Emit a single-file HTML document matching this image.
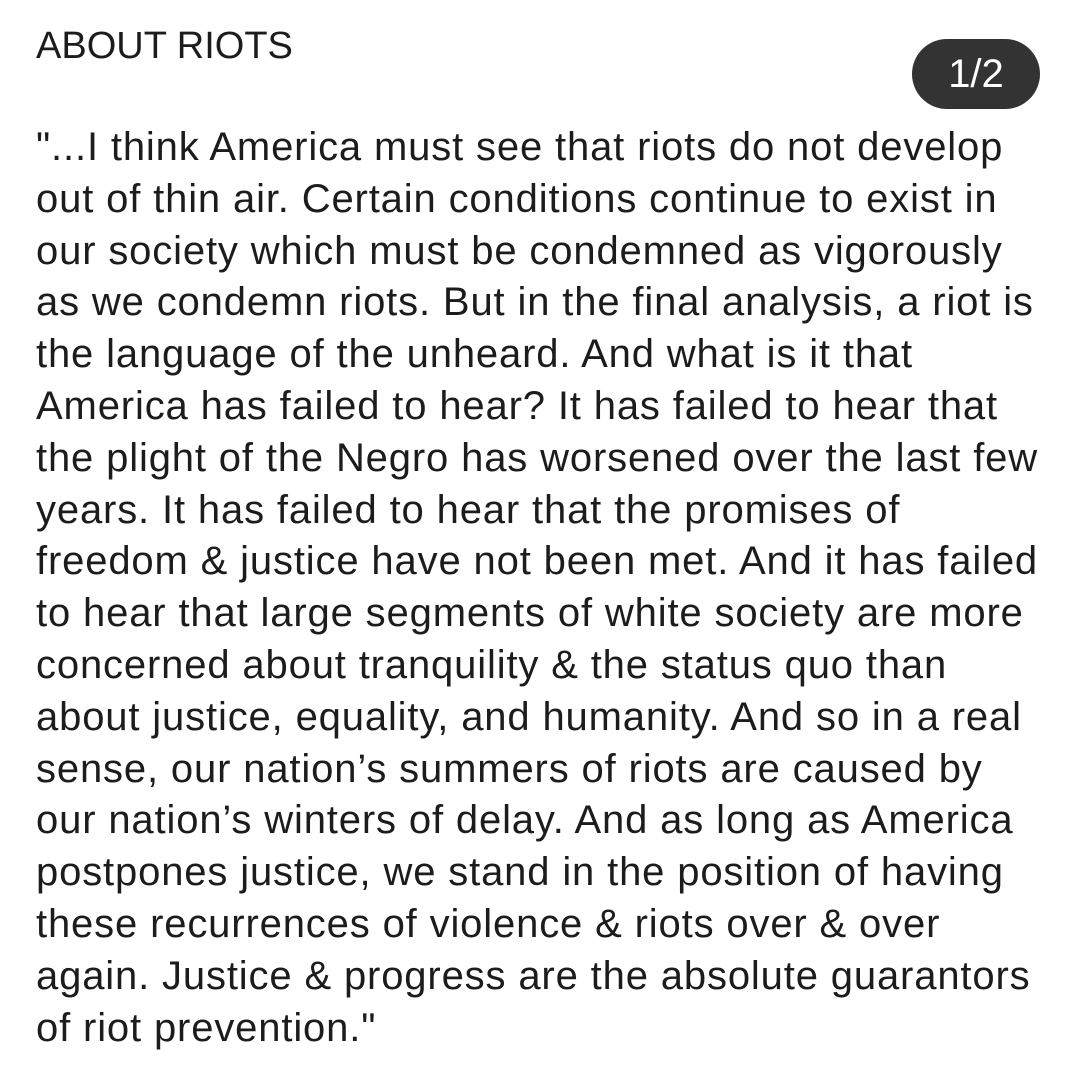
<!DOCTYPE html>
<html><head><meta charset="utf-8"><style>
html,body{margin:0;padding:0;background:#fff;}
body{width:1080px;height:1080px;position:relative;overflow:hidden;font-family:"Liberation Sans",sans-serif;color:#1c1c1c;}
.title{position:absolute;left:36px;top:24px;font-size:38px;line-height:44px;}
.badge{position:absolute;left:912px;top:39px;width:128px;height:70px;border-radius:35px;background:#333;color:#fff;font-size:40px;line-height:70px;text-align:center;}
.body{position:absolute;left:36px;top:122px;font-size:40px;letter-spacing:0.85px;line-height:51.8px;white-space:nowrap;}
</style></head><body>
<div class="title">ABOUT RIOTS</div>
<div class="badge">1/2</div>
<div class="body">"...I think America must see that riots do not develop<br>out of thin air. Certain conditions continue to exist in<br>our society which must be condemned as vigorously<br>as we condemn riots. But in the final analysis, a riot is<br>the language of the unheard. And what is it that<br>America has failed to hear? It has failed to hear that<br>the plight of the Negro has worsened over the last few<br>years. It has failed to hear that the promises of<br>freedom &amp; justice have not been met. And it has failed<br>to hear that large segments of white society are more<br>concerned about tranquility &amp; the status quo than<br>about justice, equality, and humanity. And so in a real<br>sense, our nation’s summers of riots are caused by<br>our nation’s winters of delay. And as long as America<br>postpones justice, we stand in the position of having<br>these recurrences of violence &amp; riots over &amp; over<br>again. Justice &amp; progress are the absolute guarantors<br>of riot prevention."</div>
</body></html>
